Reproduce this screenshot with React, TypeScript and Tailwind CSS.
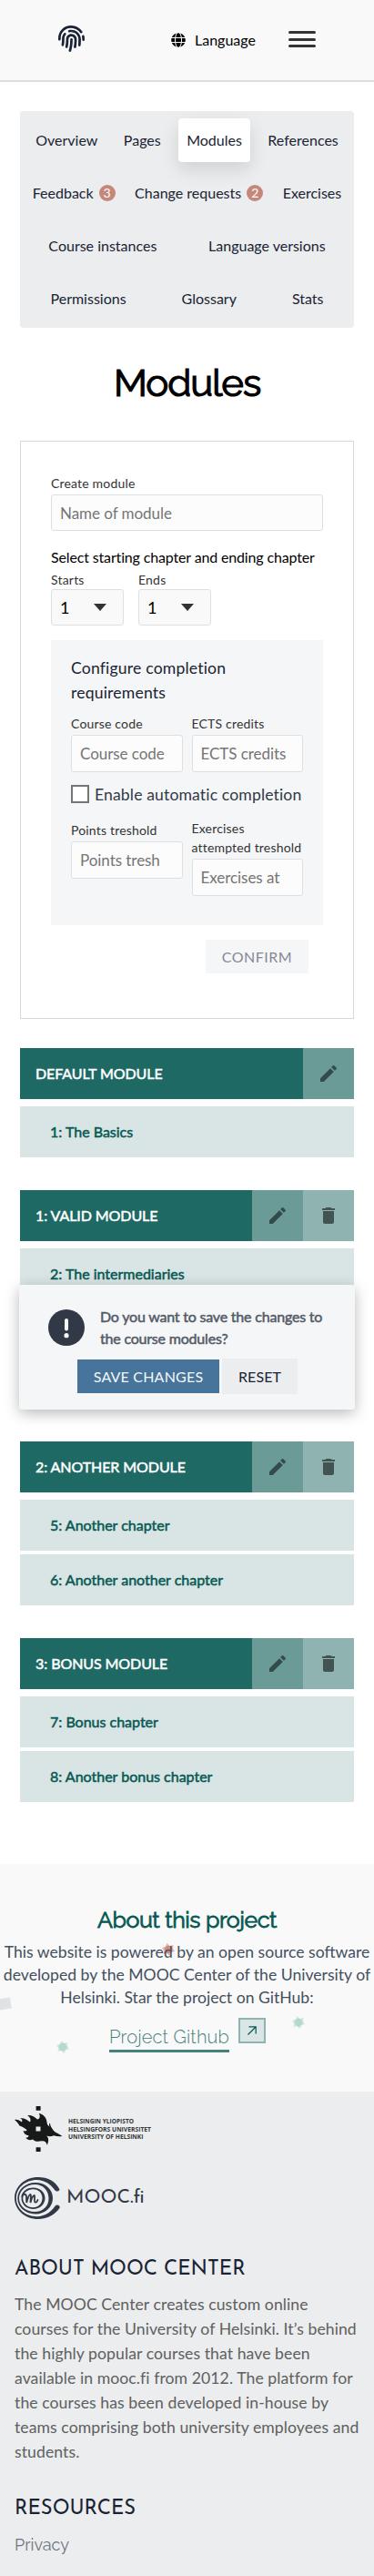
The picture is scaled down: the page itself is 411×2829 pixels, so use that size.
import type { ReactNode } from "react";
import { FaFingerprint, FaGlobe } from "react-icons/fa";
import { MdDelete, MdEdit } from "react-icons/md";

const fauxBold = "[-webkit-text-stroke:0.5px_currentColor]";

function Tab({ children, badge, active }: { children: ReactNode; badge?: string; active?: boolean }) {
  return (
    <a
      className={
        "flex h-12 flex-auto items-center justify-center rounded-[4px] text-[#1a2333] " +
        (active ? "bg-white shadow-[0_8px_20px_rgba(0,0,0,0.12)]" : "")
      }
    >
      {children}
      {badge && (
        <span className="ml-1.5 flex h-[18px] w-[18px] items-center justify-center rounded-full bg-[#c58779] text-[14px] leading-none text-white">
          {badge}
        </span>
      )}
    </a>
  );
}

function Field({ label, placeholder, numeric, tall }: { label: string; placeholder: string; numeric?: boolean; tall?: boolean }) {
  return (
    <label className="flex min-w-0 flex-1 flex-col">
      <span className="text-[14px] leading-[21px] tracking-[0.18px] text-[#333]">{label}</span>
      <input
        placeholder={placeholder}
        className={
          "mt-[2px] w-full rounded-[3px] border border-[#dedfe0] bg-[#fcfcfc] pl-[9px] text-[17px] tracking-[-0.05px] placeholder:text-[#757575] placeholder:opacity-100 " +
          (tall ? "h-[41px] " : "h-10 ") +
          (numeric ? "pr-6" : "pr-2")
        }
      />
    </label>
  );
}

function Select({ label }: { label: string }) {
  return (
    <div className="w-20">
      <div className="h-[21px] text-[14px] leading-[21px] tracking-[0.2px] text-[#333]">{label}</div>
      <div className="flex h-10 items-center rounded-[3px] border border-[#dedfe0] bg-[#f9f9f9] pl-[9px] text-[18px] text-black">
        <span className="w-[37px]">1</span>
        <svg width="14" height="8" viewBox="0 0 14 8">
          <path d="M0 0h14L7 8z" fill="#333" />
        </svg>
      </div>
    </div>
  );
}

function Module({ title, chapters, removable, className = "" }: { title: string; chapters: string[]; removable?: boolean; className?: string }) {
  return (
    <section className={className}>
      <header className="flex h-14 bg-[#1f6964]">
        <h3 className={"flex flex-1 items-center pl-[17px] text-[16px] tracking-[-0.08px] text-white uppercase " + fauxBold}>{title}</h3>
        <button className="flex w-14 items-center justify-center bg-[#6a9b97] text-[#344c49]">
          <MdEdit size={24} />
        </button>
        {removable && (
          <button className="flex w-14 items-center justify-center bg-[#8fb3b0] text-[#425352]">
            <MdDelete size={24} />
          </button>
        )}
      </header>
      <div className="mt-2 flex flex-col gap-1">
        {chapters.map((c) => (
          <div key={c} className={"flex h-14 items-center bg-[#d9e5e4] pl-[33px] text-[16px] text-[#065853] " + fauxBold}>
            {c}
          </div>
        ))}
      </div>
    </section>
  );
}

function Star({ className }: { className: string }) {
  return (
    <svg className={"absolute h-[14px] w-[14px] " + className} viewBox="-7 -7 14 14" fill="currentColor">
      <path opacity=".5" d="M-1.5-7 1.6-4 5.5-5 5-1 7 2 3.5 3.2 1.2 7-1.6 4.2-5.5 5-4.7 1.2-7-1.8-3-3.2z" />
      <circle r="4.3" opacity=".7" />
    </svg>
  );
}

function HelsinkiLogo() {
  return (
    <svg width="152" height="50" viewBox="0 0 152 50" fill="#171a18" className="block">
      <path d="M23.6 0h5v4.8h-5zM23.6 45.2h5V50h-5z" />
      <path
        fillRule="evenodd"
        d="M0 15C2.500 14 5.500 15.500 8 17.500 9 16 8 14 6 13.300 10 12.500 14 15 17 17.500 18.500 15 17 12 14 10 18.500 9.500 22 11.500 25 14.500 28 14 28.500 10.500 26.700 8 31 8.500 35 12 35.500 17.500 35.700 20 37 22 38.500 22.500 37.500 21 38 19.500 39 18.500 39 22 41 24 43 27 45 29.500 49 30 52.300 33 49 33.500 46 33 43 32.300 40.500 33.500 37.500 33.500 35 32.500 37.500 34.500 38 38.500 35.700 42.700 35 39.500 33 38 30 38.300 26 39 22.500 39.500 20 36.500 17 38 14 37 12.300 34.700 14.500 34.700 15.500 33.500 15.500 32.300 12.500 32 10 30 9.500 27 12 28 13.500 27 13.500 26 11 24.500 9 22.500 5.500 21.500 4 19 2.500 17 0 15zM23.500 22.500v5h5v-5z"
      />
      <g fontFamily="Open Sans" fontSize="7.600" fontWeight="700" fill="#333635">
        <text x="59" y="19.300" textLength="72" lengthAdjust="spacingAndGlyphs">HELSINGIN YLIOPISTO</text>
        <text x="59" y="27.900" textLength="91" lengthAdjust="spacingAndGlyphs">HELSINGFORS UNIVERSITET</text>
        <text x="59" y="36.400" textLength="82.500" lengthAdjust="spacingAndGlyphs">UNIVERSITY OF HELSINKI</text>
      </g>
    </svg>
  );
}

function MoocMark() {
  return (
    <svg width="50" height="46" viewBox="0 0 50 46" fill="#313947" className="block">
      <path d="M49.500 13.500C45 4 36 0 26 0 11 0 0 10.500 0 23s11 23 26 23c10 0 19-5 23.700-12.500.5-3-3.500-4-5-2C40 38.500 33 43.200 24.500 43.200 11.500 43.200 1.800 34 1.800 23S11.500 3 24.500 3C33 3 40 8 44.500 14.500c1.700 1.700 4.600 1 5-1z" />
      <path fillRule="evenodd" d="M23 6c11 0 19 7.500 19 17s-8 17.500-19 17.500S3.300 33 3.300 23.300 12 6 23 6zm-.6 2C12.500 8 5 15 5 23.300S12.500 38 22 38s15.500-6 15.500-14.700S31.500 8 22.400 8z" />
      <path fillRule="evenodd" d="M20.500 11.500c7.500 0 13 5 13 11.500s-5.500 12-13 12-13-5-13-12 5.500-11.500 13-11.500zm0 1.700c-6.500 0-11.300 4.300-11.300 9.900s4.800 10.200 11 10.200 10.300-4.500 10.300-10.200-4-9.900-10-9.900z" />
      <path
        fill="none"
        stroke="#313947"
        strokeWidth="1.800"
        strokeLinecap="round"
        d="M8.500 21c0-3 4-3 4.500 0l.2 7c1-4 2-8 4-9 1.500 0 .3 5 .3 9 1-4 2-7 4-8 1.500 0-.5 7 1 7.500 1.500.5 2.500-1 3-2.500"
      />
    </svg>
  );
}

export default function App() {
  return (
    <div className="relative h-[2829px] w-[411px] overflow-hidden bg-white font-['Lato',sans-serif] text-[16px] text-black">
      <header className="flex h-[90px] items-center border-b-2 border-[#dddddd] bg-[#f9f9f9] pl-16">
        <FaFingerprint size={29} className="-mt-[3px] text-[#1a2333]" />
        <FaGlobe size={16} className="ml-[95px]" />
        <span className="ml-[10px] w-[67px]">Language</span>
        <span className="ml-9 -mt-[2px] flex w-[30px] flex-col gap-[4.500px]">
          <i className="h-[3px] rounded-full bg-[#333]" />
          <i className="h-[3px] rounded-full bg-[#333]" />
          <i className="h-[3px] rounded-full bg-[#333]" />
        </span>
      </header>

      <nav className="mx-[22px] mt-8 flex h-[238px] flex-col gap-2.5 rounded-[4px] bg-[#ebedee] p-2">
        <div className="flex gap-2.5">
          <Tab>Overview</Tab>
          <Tab>Pages</Tab>
          <Tab active>Modules</Tab>
          <Tab>References</Tab>
        </div>
        <div className="flex gap-2.5">
          <Tab badge="3">Feedback</Tab>
          <Tab badge="2">Change requests</Tab>
          <Tab>Exercises</Tab>
        </div>
        <div className="flex gap-2.5">
          <Tab>Course instances</Tab>
          <Tab>Language versions</Tab>
        </div>
        <div className="flex gap-2.5">
          <Tab>Permissions</Tab>
          <Tab>Glossary</Tab>
          <Tab>Stats</Tab>
        </div>
      </nav>

      <h1 className="mt-[31px] mb-[33px] h-[60px] text-center font-['Raleway','Lato',sans-serif] text-[42px] leading-[60px] tracking-[-1.1px] [-webkit-text-stroke:1.2px_currentColor]">
        Modules
      </h1>

      <main className="mx-[22px]">
        <form className="h-[635px] border border-[#d7d8d8] px-[33px] pt-[35px]">
          <div className="flex">
            <Field label="Create module" placeholder="Name of module" />
          </div>
          <p className="mt-[17px] leading-6 tracking-[-0.15px] whitespace-nowrap">Select starting chapter and ending chapter</p>
          <div className="mt-[2px] flex gap-4">
            <Select label="Starts" />
            <Select label="Ends" />
          </div>
          <div className="mt-4 h-[313px] bg-[#f5f6f7] px-[22px] pt-[17px]">
            <p className="text-[17.6px] leading-[27px] tracking-[0.18px] text-[#1a2333]">Configure completion requirements</p>
            <div className="mt-[10px] flex gap-[10px]">
              <Field label="Course code" placeholder="Course code" tall />
              <Field label="ECTS credits" placeholder="ECTS credits" tall />
            </div>
            <label className="mt-3 flex h-[27px] items-center text-[17.6px] tracking-[0.13px] whitespace-nowrap text-[#313947]">
              <span className="mr-[6px] -mt-[3px] h-5 w-5 border-2 border-[#767676] bg-white" />
              Enable automatic completion
            </label>
            <div className="mt-3 flex items-start gap-[10px]">
              <div className="flex min-w-0 flex-1 pt-[2px]">
                <Field label="Points treshold" placeholder="Points treshold" numeric tall />
              </div>
              <div className="flex min-w-0 flex-1">
                <Field label="Exercises attempted treshold" placeholder="Exercises attempted treshold" numeric tall />
              </div>
            </div>
          </div>
          <div className="mt-4 mr-4 flex justify-end">
            <button className="h-[37px] w-[113px] bg-[#f5f6f7] tracking-[0.5px] text-[#868994]">CONFIRM</button>
          </div>
        </form>

        <Module className="mt-8" title="Default module" chapters={["1: The Basics"]} />
        <div className="relative mt-9 h-60">
          <Module title="1: Valid module" removable chapters={["2: The intermediaries"]} />
          <div className="absolute top-[104px] -left-px h-[137px] w-[369px] rounded-[3px] bg-[#f5f6f7] pt-[22px] shadow-[0_4px_16px_rgba(0,0,0,0.28)]">
            <div className="flex pl-8">
              <svg width="40" height="40" viewBox="0 0 40 40" className="mt-[5px]">
                <circle cx="20" cy="20" r="20" fill="#313947" />
                <path d="M20 12v9.500" stroke="#f5f6f7" strokeWidth="4" strokeLinecap="round" />
                <circle cx="20" cy="28.700" r="2.600" fill="#f5f6f7" />
              </svg>
              <p className={"mt-px ml-[17px] w-[250px] leading-6 tracking-[-0.2px] text-[#535a66] " + fauxBold}>
                Do you want to save the changes to the course modules?
              </p>
            </div>
            <div className="mt-[10px] flex items-center gap-[3px] pl-16">
              <button className="h-[37px] w-[156px] bg-[#46749b] tracking-[0.2px] text-[#f5f6f7]">SAVE CHANGES</button>
              <button className="h-[39px] w-[83px] bg-[#ebedee] tracking-[0.1px] text-[#1a2333]">RESET</button>
            </div>
          </div>
        </div>
        <Module className="mt-9" title="2: Another module" removable chapters={["5: Another chapter", "6: Another another chapter"]} />
        <Module className="mt-9" title="3: Bonus module" removable chapters={["7: Bonus chapter", "8: Another bonus chapter"]} />
      </main>

      <section className="relative mt-[68px] h-[250px] bg-[#f9f9f9] pt-[43px] text-center">
        <Star className="top-[87px] left-[178px] text-[#c9786a]" />
        <Star className="top-[167px] left-[321px] text-[#a8d3c8]" />
        <Star className="top-[194px] left-[62px] text-[#a8d3c8]" />
        <i className="absolute top-[148px] -left-2 h-3 w-5 -rotate-[9deg] bg-[#e0e2e3]" />
        <h2 className="relative font-['Raleway','Lato',sans-serif] text-[25px] leading-9 tracking-[-0.43px] text-[#065853] [-webkit-text-stroke:0.8px_currentColor]">
          About this project
        </h2>
        <p className="relative mt-[5px] text-[17.6px] leading-[25px] text-[#44505f]">
          This website is powered by an open source software
          <br />
          developed by the MOOC Center of the University of
          <br />
          Helsinki. Star the project on GitHub:
        </p>
        <div className="relative flex items-start pt-[10px] pl-[120px]">
          <a className="mt-[7px] h-[31px] w-[132px] border-b-[3px] border-[#44827e] text-left font-['Raleway','Lato',sans-serif] text-[20px] leading-7 font-light tracking-[0.18px] whitespace-nowrap text-[#44827e]">
            Project Github
          </a>
          <span className="ml-[10px] flex h-7 w-[30px] items-center justify-center border-2 border-[#8fb3b0] bg-[#dae6e5]">
            <svg width="10" height="10" viewBox="0 0 10 10" fill="none" stroke="#065853" strokeWidth="1.200">
              <path d="M.5 9.500 9 1M1.500.8h7.700v7.700" />
            </svg>
          </span>
        </div>
      </section>

      <footer className="h-[532px] bg-[#ebedee] px-4 pt-4">
        <HelsinkiLogo />
        <div className="mt-7 flex h-[46px] items-start">
          <MoocMark />
          <span className="mt-[7px] ml-[7px] font-['Josefin_Sans','Lato',sans-serif] text-[21px] leading-8 text-[#313947]">MOOC.fi</span>
        </div>
        <h3 className="mt-10 font-['Josefin_Sans','Lato',sans-serif] text-[22px] leading-8 whitespace-nowrap text-[#1a2333]">ABOUT MOOC CENTER</h3>
        <p className="mt-2 text-[17.6px] leading-[27px] tracking-[0.08px] whitespace-nowrap text-[#606060]">
          The MOOC Center creates custom online
          <br />
          courses for the University of Helsinki. It’s behind
          <br />
          the highly popular courses that have been
          <br />
          available in mooc.fi from 2012. The platform for
          <br />
          the courses has been developed in-house by
          <br />
          teams comprising both university employees and
          <br />
          students.
        </p>
        <h3 className="mt-[34px] font-['Josefin_Sans','Lato',sans-serif] text-[22px] leading-8 text-[#1a2333]">RESOURCES</h3>
        <a className="mt-[9px] block font-['Raleway','Lato',sans-serif] text-[18px] leading-[27px] text-[#6d7480]">Privacy</a>
      </footer>
    </div>
  );
}
